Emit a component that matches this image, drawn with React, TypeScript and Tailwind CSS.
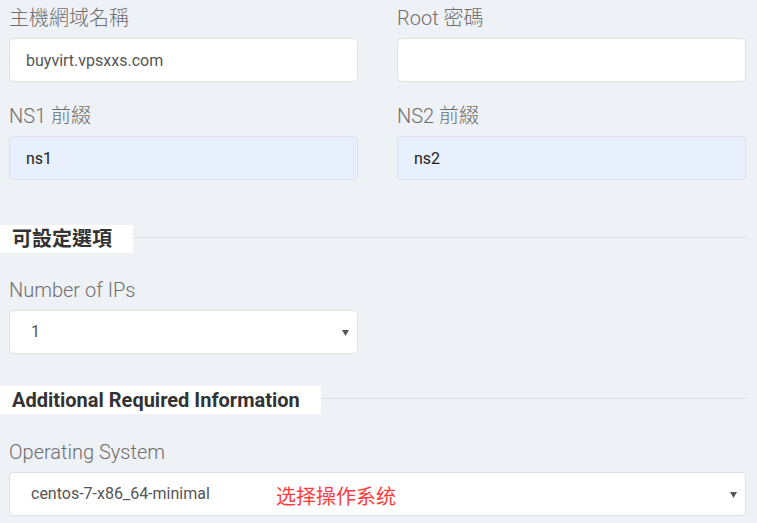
import React from 'react';

const font = "font-['Roboto','Noto_Sans_CJK_TC',sans-serif]";

const Label: React.FC<{ text: string }> = ({ text }) => (
  <label className="block h-6 mb-2 text-[20px] leading-6 font-light text-[#6f6f6f]">{text}</label>
);

const TextInput: React.FC<{ value: string; filled?: boolean }> = ({ value, filled }) => (
  <input
    type="text"
    defaultValue={value}
    className={`block w-full h-[44px] px-4 rounded border border-[#dde0e4] text-[16px] outline-none ${
      filled ? 'bg-[#e8f0fe] text-[#222]' : 'bg-white text-[#555]'
    }`}
  />
);

const SelectBox: React.FC<{ value: string; children?: React.ReactNode }> = ({ value, children }) => (
  <div className="relative flex items-center w-full h-[44px] pl-[21px] pr-[8px] rounded border border-[#dde0e4] bg-white text-[16px] text-[#555]">
    <span className="flex-1">{value}</span>
    <svg width="7" height="6" viewBox="0 0 7 6" className="mt-[2px]">
      <path d="M0 0h7L3.5 6z" fill="#555" />
    </svg>
    {children}
  </div>
);

const SectionTitle: React.FC<{ text: string }> = ({ text }) => (
  <div className="flex items-center -ml-[9px] h-7">
    <span className="h-7 leading-7 bg-white pl-3 pr-[21px] text-[20px] font-bold text-[#333]">{text}</span>
    <div className="flex-1 h-px bg-[#dde0e4] -mt-[3px]" />
  </div>
);

export default function App() {
  return (
    <div className={`min-h-[523px] w-[757px] bg-[#eef1f5] pl-[9px] pr-[11px] pt-[6px] overflow-hidden ${font}`}>
      <div className="grid grid-cols-2 gap-x-[39px]">
        <div className="mb-[22px]">
          <Label text="主機網域名稱" />
          <TextInput value="buyvirt.vpsxxs.com" />
        </div>
        <div className="mb-[22px]">
          <Label text="Root 密碼" />
          <TextInput value="" />
        </div>
        <div>
          <Label text="NS1 前綴" />
          <TextInput value="ns1" filled />
        </div>
        <div>
          <Label text="NS2 前綴" />
          <TextInput value="ns2" filled />
        </div>
      </div>

      <div className="mt-[45px]">
        <SectionTitle text="可設定選項" />
      </div>

      <div className="mt-[25px] w-[349px]">
        <Label text="Number of IPs" />
        <SelectBox value="1" />
      </div>

      <div className="mt-8">
        <SectionTitle text="Additional Required Information" />
      </div>

      <div className="mt-[26px]">
        <Label text="Operating System" />
        <SelectBox value="centos-7-x86_64-minimal">
          <span className="absolute left-[266px] top-[12px] text-[20px] leading-6 text-[#ff3b3b]">选择操作系统</span>
        </SelectBox>
      </div>
    </div>
  );
}
